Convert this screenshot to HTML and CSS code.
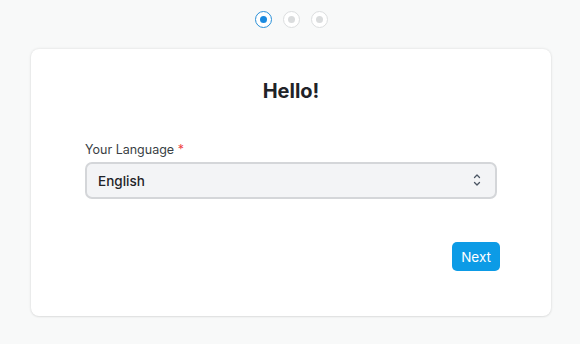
FILE: index.html
```html
<!DOCTYPE html>
<html lang="en">

<head>
    <meta charset="UTF-8">
    <meta name="viewport" content="width=device-width, initial-scale=1.0">
    <title>Setup</title>
    <link rel="stylesheet" href="styles.css">
</head>

<body>

    <!-- Step indicator -->
    <div class="steps">
        <span class="step active"></span>
        <span class="step"></span>
        <span class="step"></span>
    </div>

    <div class="card">
        <h1>Hello!</h1>

        <div class="field">
            <label for="language">Your Language <span class="req">*</span></label>
            <div class="select-wrap">
                <select id="language">
                    <option>English</option>
                    <option>Deutsch</option>
                    <option>Français</option>
                </select>
                <svg class="chevrons" width="10" height="14" viewBox="0 0 10 14" fill="none" stroke="#4b5563" stroke-width="1.3" stroke-linecap="round" stroke-linejoin="round">
                    <path d="M2.5 4.5 L5 2 L7.5 4.5" />
                    <path d="M2.5 9.5 L5 12 L7.5 9.5" />
                </svg>
            </div>
        </div>

        <div class="actions">
            <button class="btn">Next</button>
        </div>
    </div>

</body>

</html>
```

FILE: styles.css
```css
* {
    margin: 0;
    padding: 0;
    box-sizing: border-box;
    font-family: 'Inter', 'Liberation Sans', sans-serif;
}

body {
    background: #f8f9f9;
    min-height: 100vh;
    padding: 11px 29px 0 31px;
    color: #1f2937;
}

.steps {
    display: flex;
    justify-content: center;
    gap: 11px;
    margin-bottom: 21px;
}

.step {
    width: 17px;
    height: 17px;
    border-radius: 50%;
    border: 1px solid #dcdedf;
    background: #fff;
    display: flex;
    align-items: center;
    justify-content: center;
}

.step::after {
    content: '';
    width: 7px;
    height: 7px;
    border-radius: 50%;
    background: #dadcdd;
}

.step.active {
    border-color: #2a90d8;
}

.step.active::after {
    background: #1a8ae0;
}

.card {
    background: #fff;
    height: 267px;
    border-radius: 8px;
    box-shadow: 0 0 3px rgba(0, 0, 0, 0.12), 0 1px 2px rgba(0, 0, 0, 0.06);
    padding: 30px 54px 0 54px;
}

h1 {
    text-align: center;
    font-size: 20px;
    font-weight: 700;
    color: #1f2328;
    margin-bottom: 39px;
}

.field label {
    display: block;
    font-size: 12.5px;
    color: #3a3f45;
    margin-bottom: 5px;
}

.req {
    color: #ef4444;
}

.select-wrap {
    position: relative;
}

select {
    width: 100%;
    height: 37px;
    appearance: none;
    border: 2px solid #d4d6d9;
    border-radius: 7px;
    background: #f3f4f6;
    padding: 0 11px;
    font-size: 13.5px;
    font-weight: 500;
    color: #1f2328;
    outline: none;
}

.chevrons {
    position: absolute;
    right: 15px;
    top: 11px;
    pointer-events: none;
}

.actions {
    display: flex;
    justify-content: flex-end;
    margin-top: 43px;
    margin-right: -3px;
}

.btn {
    background: #0c9be6;
    color: #fff;
    border: none;
    border-radius: 5px;
    height: 29px;
    padding: 0 9px;
    font-size: 13.5px;
    cursor: pointer;
}
```
